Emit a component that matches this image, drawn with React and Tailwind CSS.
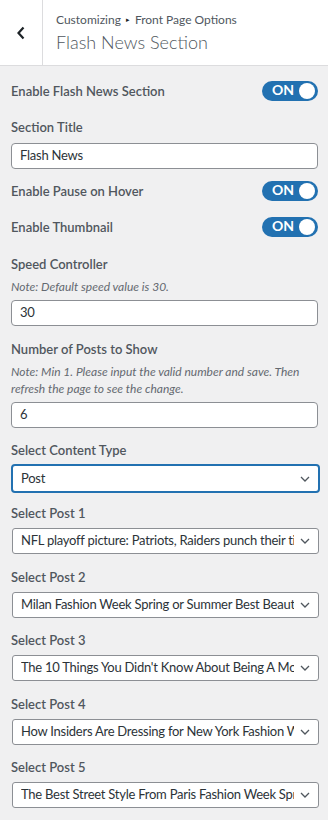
import React from "react";

const font = { fontFamily: 'Lato, "Noto Sans", sans-serif' };

function Toggle() {
  return (
    <div className="relative w-[56px] h-[20px] rounded-full bg-[#2271b1] shrink-0">
      <span className="absolute left-[10px] top-[0px] text-[14px] leading-[18px] font-bold text-white">ON</span>
      <span className="absolute right-[3px] top-[2px] w-[16px] h-[16px] rounded-full bg-white"></span>
    </div>
  );
}

function Label({ children }) {
  return <div className="text-[13px] leading-[18px] font-semibold text-[#50575e]">{children}</div>;
}

function Chevron() {
  return (
    <svg width="10" height="6" viewBox="0 0 10 6" className="shrink-0">
      <path d="M1 1l4 4 4-4" fill="none" stroke="#50575e" strokeWidth="1.3" />
    </svg>
  );
}

function Select({ text, focused }) {
  return (
    <div
      className={
        focused
          ? "flex items-center h-[29px] ml-[11px] w-[309px] rounded-[4px] border-2 border-[#2271b1] bg-white pl-[8px] pr-[8px]"
          : "flex items-center h-[26px] ml-[12px] w-[307px] rounded-[3px] border border-[#8c8f94] bg-white pl-[8px] pr-[8px]"
      }
    >
      <div className="flex-1 overflow-hidden whitespace-nowrap text-[13px] tracking-[-0.25px] text-[#2c3338]">{text}</div>
      <div className="pl-[6px]"><Chevron /></div>
    </div>
  );
}

function Input({ value }) {
  return (
    <div className="flex items-center h-[26px] ml-[11px] w-[307px] rounded-[4px] border border-[#8c8f94] bg-white px-[8px] text-[13px] tracking-[-0.25px] text-[#2c3338]">
      {value}
    </div>
  );
}

function Note({ children }) {
  return <div className="px-[11px] text-[12px] leading-[17px] italic text-[#646970]">{children}</div>;
}

export default function App() {
  const posts = [
    "NFL playoff picture: Patriots, Raiders punch their ticket",
    "Milan Fashion Week Spring or Summer Best Beauty",
    "The 10 Things You Didn't Know About Being A Model",
    "How Insiders Are Dressing for New York Fashion Week",
    "The Best Street Style From Paris Fashion Week Spring",
  ];
  const gaps = ["mt-[11px]", "mt-[14px]", "mt-[13px]", "mt-[14px]", "mt-[13px]"];
  return (
    <div className="w-[328px] h-[820px] bg-[#f0f0f1] overflow-hidden" style={font}>
      <div className="flex h-[66px] bg-white border-b border-[#dcdcde]">
        <div className="w-[43px] border-r border-[#dcdcde] flex items-center justify-center">
          <svg width="10" height="14" viewBox="0 0 10 14">
            <path d="M7.5 1.5L2.5 7l5 5.5" fill="none" stroke="#1d2327" strokeWidth="2.2" />
          </svg>
        </div>
        <div className="pl-[13px] pt-[11px]">
          <div className="text-[12px] leading-[17px] text-[#50575e]">
            Customizing<span className="text-[7px] text-[#1d2327] relative -top-[2px] mx-[5px]">▸</span>Front Page Options
          </div>
          <div className="text-[18px] leading-[25px] font-light text-[#50575e]">Flash News Section</div>
        </div>
      </div>

      <div className="flex items-center justify-between pl-[11px] pr-[10px] mt-[15px]">
        <Label>Enable Flash News Section</Label>
        <Toggle />
      </div>

      <div className="px-[11px] mt-[17px]"><Label>Section Title</Label></div>
      <div className="mt-[7px]"><Input value="Flash News" /></div>

      <div className="flex items-center justify-between pl-[11px] pr-[10px] mt-[12px]">
        <Label>Enable Pause on Hover</Label>
        <Toggle />
      </div>
      <div className="flex items-center justify-between pl-[11px] pr-[10px] mt-[16px]">
        <Label>Enable Thumbnail</Label>
        <Toggle />
      </div>

      <div className="px-[11px] mt-[18px]"><Label>Speed Controller</Label></div>
      <div className="mt-[5px]"><Note>Note: Default speed value is 30.</Note></div>
      <div className="mt-[5px]"><Input value="30" /></div>

      <div className="px-[11px] mt-[14px]"><Label>Number of Posts to Show</Label></div>
      <div className="mt-[5px]"><Note>Note: Min 1. Please input the valid number and save. Then refresh the page to see the change.</Note></div>
      <div className="mt-[5px]"><Input value="6" /></div>

      <div className="px-[11px] mt-[13px]"><Label>Select Content Type</Label></div>
      <div className="mt-[5px]"><Select text="Post" focused /></div>

      {posts.map((p, i) => (
        <div key={i}>
          <div className={"px-[11px] " + gaps[i]}><Label>{"Select Post " + (i + 1)}</Label></div>
          <div className="mt-[6px]"><Select text={p} /></div>
        </div>
      ))}
    </div>
  );
}
